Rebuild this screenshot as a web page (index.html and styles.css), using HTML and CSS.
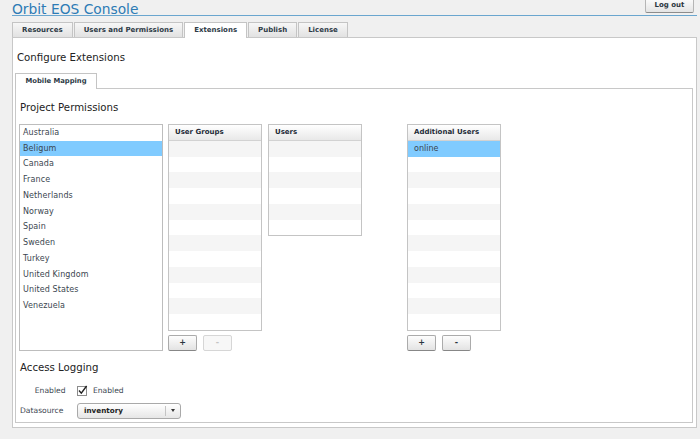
FILE: index.html
```html
<!DOCTYPE html>
<html>
<head>
<meta charset="utf-8">
<title>Orbit EOS Console</title>
<link rel="stylesheet" href="styles.css">
</head>
<body>
<div class="header">
  <div class="title">Orbit EOS Console</div>
  <button class="logout">Log out</button>
</div>
<div class="tabs">
  <div class="tab">Resources</div>
  <div class="tab">Users and Permissions</div>
  <div class="tab active">Extensions</div>
  <div class="tab">Publish</div>
  <div class="tab">License</div>
</div>
<div class="panel">
  <h1 class="page-title">Configure Extensions</h1>
  <div class="subtabs"><div class="subtab">Mobile Mapping</div></div>
  <div class="inner">
    <h2 class="section">Project Permissions</h2>
    <div class="lists">
      <ul class="country-list">
        <li>Australia</li>
        <li class="sel">Beligum</li>
        <li>Canada</li>
        <li>France</li>
        <li>Netherlands</li>
        <li>Norway</li>
        <li>Spain</li>
        <li>Sweden</li>
        <li>Turkey</li>
        <li>United Kingdom</li>
        <li>United States</li>
        <li>Venezuela</li>
      </ul>
      <div class="col col-groups">
        <div class="grid">
          <div class="grid-head">User Groups</div>
          <div class="grid-body">
            <div class="r"></div><div class="r"></div><div class="r"></div><div class="r"></div>
            <div class="r"></div><div class="r"></div><div class="r"></div><div class="r"></div>
            <div class="r"></div><div class="r"></div><div class="r"></div><div class="r"></div>
          </div>
        </div>
        <div class="btns"><button class="btn">+</button><button class="btn disabled">-</button></div>
      </div>
      <div class="col col-users">
        <div class="grid">
          <div class="grid-head">Users</div>
          <div class="grid-body">
            <div class="r"></div><div class="r"></div><div class="r"></div>
            <div class="r"></div><div class="r"></div><div class="r"></div>
          </div>
        </div>
      </div>
      <div class="col col-additional">
        <div class="grid">
          <div class="grid-head">Additional Users</div>
          <div class="grid-body">
            <div class="r sel">online</div><div class="r"></div><div class="r"></div><div class="r"></div>
            <div class="r"></div><div class="r"></div><div class="r"></div><div class="r"></div>
            <div class="r"></div><div class="r"></div><div class="r"></div><div class="r"></div>
          </div>
        </div>
        <div class="btns"><button class="btn">+</button><button class="btn">-</button></div>
      </div>
    </div>
    <h2 class="section access">Access Logging</h2>
    <div class="form-row first">
      <div class="label">Enabled</div>
      <svg class="check" width="12" height="11" viewBox="0 0 12 11">
        <rect x="0.5" y="1.5" width="9" height="9" fill="#fff" stroke="#8c8c8c"/>
        <path d="M2 5.5 L4.3 8.2 L9.6 1" fill="none" stroke="#222" stroke-width="1.4"/>
      </svg>
      <span class="check-text">Enabled</span>
    </div>
    <div class="form-row">
      <div class="label">Datasource</div>
      <div class="select">
        <span class="select-val">inventory</span>
        <span class="select-arrow"><span class="tri"></span></span>
      </div>
    </div>
  </div>
</div>
</body>
</html>
```
FILE: styles.css
```css
* { box-sizing: border-box; }
html, body { margin: 0; padding: 0; }
body {
  background: #f0f0f0;
  font-family: "DejaVu Sans", Verdana, sans-serif;
  color: #333;
  width: 700px;
  height: 439px;
  overflow: hidden;
}

.header {
  height: 16px;
  margin: 0 3px 0 12px;
  border-bottom: 1px solid #6aa6cf;
  display: flex;
  justify-content: space-between;
  align-items: flex-start;
}
.title {
  font-size: 13.8px;
  line-height: 15px;
  padding-top: 1.7px;
  color: #2d7bb5;
  white-space: nowrap;
}
.logout {
  margin: -3px 3px 0 0;
  width: 49px;
  height: 16px;
  padding: 0;
  font-family: "DejaVu Sans", Verdana, sans-serif;
  font-size: 7px;
  font-weight: bold;
  color: #2a3540;
  line-height: 14px;
  border: 1px solid #b5b5b5;
  border-bottom-color: #8c8c8c;
  border-radius: 2px;
  background: linear-gradient(#fdfdfd, #e4e4e4);
}

.tabs {
  display: flex;
  gap: 1px;
  margin: 6px 0 0 12px;
}
.tab {
  height: 15px;
  padding: 0 9px;
  border: 1px solid #c4c4c4;
  border-bottom: 0;
  background: linear-gradient(#f7f7f7, #e2e2e2);
  font-size: 7px;
  font-weight: bold;
  line-height: 14px;
  color: #2d3a46;
  white-space: nowrap;
}
.tab.active {
  background: #fff;
  height: 16px;
  line-height: 15px;
  margin-bottom: -1px;
  position: relative;
  z-index: 1;
}

.panel {
  margin: 0 3px 0 12px;
  height: 391px;
  border: 1px solid #c8c8c8;
  background: #fff;
  display: flex;
  flex-direction: column;
  padding: 0 3px 4px 2px;
}
.page-title {
  margin: 12.6px 0 0 2px;
  font-size: 10.2px;
  font-weight: normal;
  line-height: 13px;
  color: #222;
}
.subtabs {
  display: flex;
  margin-top: 9.7px;
}
.subtab {
  height: 16px;
  padding: 0 9.5px;
  border: 1px solid #c4c4c4;
  border-bottom: 0;
  background: #fff;
  font-size: 6.8px;
  font-weight: bold;
  line-height: 15px;
  color: #2d3a46;
  margin-bottom: -1px;
  position: relative;
  z-index: 1;
  white-space: nowrap;
}
.inner {
  flex: 1;
  border: 1px solid #c8c8c8;
  padding: 0 0 0 3px;
  display: flex;
  flex-direction: column;
}
.section {
  margin: 11.7px 0 0 1px;
  font-size: 10.2px;
  font-weight: normal;
  line-height: 13px;
  color: #222;
}
.section.access { margin-top: 9.6px; }

.lists {
  display: flex;
  align-items: flex-start;
  margin-top: 10px;
}
.country-list {
  width: 144px;
  height: 227px;
  margin: 0;
  padding: 0;
  list-style: none;
  border: 1px solid #bdbdbd;
  background: #fff;
}
.country-list li {
  height: 15.75px;
  line-height: 15.75px;
  padding-left: 3px;
  font-size: 8px;
  color: #3b4650;
  letter-spacing: 0.1px;
}
.country-list li.sel { background: #80cbff; }

.col-groups { margin-left: 5px; }
.col-users { margin-left: 6px; }
.col-additional { margin-left: 45px; }

.grid {
  width: 94px;
  border: 1px solid #c4c4c4;
  background: #fff;
}
.grid-head {
  height: 16px;
  padding-left: 6px;
  border-bottom: 1px solid #d2d2d2;
  background: linear-gradient(#ffffff, #e8e8e8);
  font-size: 7px;
  font-weight: bold;
  line-height: 15px;
  color: #1f2c38;
  white-space: nowrap;
}
.r {
  height: 15.75px;
  line-height: 15.75px;
  padding-left: 6px;
  font-size: 8px;
  color: #3b4650;
}
.r:nth-child(odd) { background: #f5f5f5; }
.r.sel { background: #80cbff; }

.btns {
  display: flex;
  gap: 6px;
  margin-top: 4px;
}
.btn {
  width: 29px;
  height: 16px;
  padding: 0;
  border: 1px solid #ababab;
  border-bottom-color: #878787;
  border-radius: 2px;
  background: linear-gradient(#fdfdfd, #e3e3e3);
  font-family: "DejaVu Sans", Verdana, sans-serif;
  font-size: 8px;
  font-weight: bold;
  line-height: 14px;
  color: #2a3540;
}
.btn.disabled {
  border-color: #d6d6d6;
  background: #f7f7f7;
  color: #c4c4c4;
}

.form-row {
  display: flex;
  align-items: center;
  height: 16px;
  margin-top: 5px;
}
.form-row.first {
  height: 14px;
  margin-top: 10.4px;
}
.label {
  width: 46.5px;
  margin-right: 11.5px;
  text-align: right;
  font-size: 7.6px;
  color: #3b4650;
  white-space: nowrap;
}
.form-row:not(.first) .label { text-align: left; padding-left: 1px; }
.check { display: block; }
.check-text {
  margin-left: 4px;
  font-size: 7.6px;
  color: #3b4650;
}
.select {
  width: 104px;
  height: 16px;
  border: 1px solid #a9a9a9;
  border-radius: 3px;
  background: linear-gradient(#ffffff, #e6e6e6);
  display: flex;
  align-items: center;
}
.select-val {
  flex: 1;
  padding-left: 6px;
  font-size: 7.2px;
  font-weight: bold;
  color: #222;
}
.select-arrow {
  width: 15px;
  height: 10px;
  border-left: 1px solid #c4c4c4;
  display: flex;
  align-items: center;
  justify-content: center;
}
.tri {
  width: 0;
  height: 0;
  border-left: 2.5px solid transparent;
  border-right: 2.5px solid transparent;
  border-top: 3px solid #333;
}
```
